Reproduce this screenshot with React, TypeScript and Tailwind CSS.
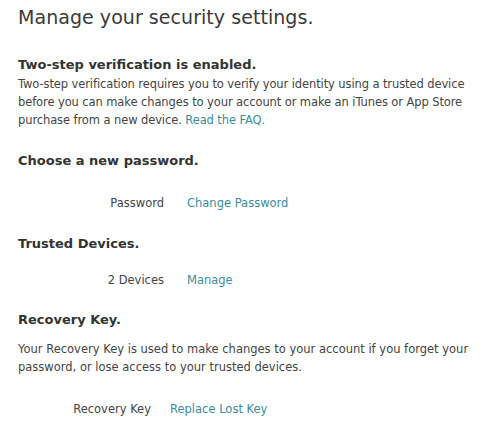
export default function App() {
  return (
    <div className="w-[502px] h-[431px] bg-white text-[#333] px-[18px] pt-[3px] font-['DejaVu_Sans',sans-serif] overflow-hidden">
      <h1 className="text-[19px] leading-[28px] text-[#3a3a3a] tracking-[0.05px]">Manage your security settings.</h1>

      <section className="mt-[24px]">
        <h2 className="text-[13px] leading-[20px] font-bold">Two-step verification is enabled.</h2>
        <p className="text-[11.5px] leading-[18px] text-[#444] tracking-[-0.1px]">
          Two-step verification requires you to verify your identity using a trusted device before you can make
          changes to your account or make an iTunes or App Store purchase from a new device.{" "}
          <a className="text-[#3a8d9c]">Read the FAQ.</a>
        </p>
      </section>

      <section className="mt-[22px]">
        <h2 className="text-[13px] leading-[20px] font-bold">Choose a new password.</h2>
        <div className="mt-[23px] flex text-[11.5px] leading-[18px]">
          <span className="w-[146px] text-right text-[#444]">Password</span>
          <a className="ml-[23px] text-[#3a8d9c]">Change Password</a>
        </div>
      </section>

      <section className="mt-[22px]">
        <h2 className="text-[13px] leading-[20px] font-bold">Trusted Devices.</h2>
        <div className="mt-[17px] flex text-[11.5px] leading-[18px]">
          <span className="w-[146px] text-right text-[#444]">2 Devices</span>
          <a className="ml-[23px] text-[#3a8d9c]">Manage</a>
        </div>
      </section>

      <section className="mt-[21px]">
        <h2 className="text-[13px] leading-[20px] font-bold">Recovery Key.</h2>
        <p className="mt-[10px] text-[11.5px] leading-[18px] text-[#444]">
          Your Recovery Key is used to make changes to your account if you forget your password, or lose access to
          your trusted devices.
        </p>
        <div className="mt-[24px] flex text-[11.5px] leading-[18px]">
          <span className="w-[133px] text-right text-[#444]">Recovery Key</span>
          <a className="ml-[19px] text-[#3a8d9c]">Replace Lost Key</a>
        </div>
      </section>
    </div>
  );
}
